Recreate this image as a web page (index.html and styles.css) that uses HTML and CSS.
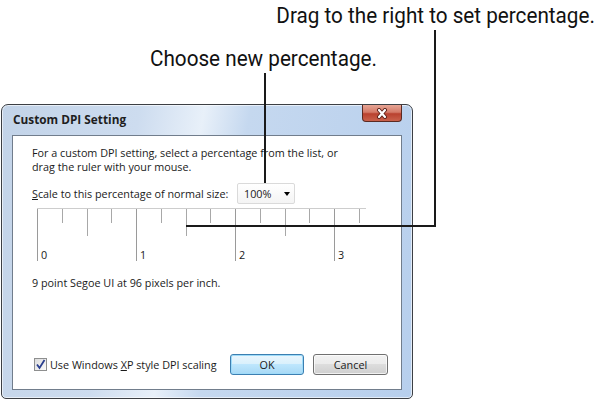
FILE: index.html
```html
<!DOCTYPE html>
<html>
<head>
<meta charset="utf-8">
<link rel="stylesheet" href="styles.css">
</head>
<body>
<div class="page">
  <div class="cap cap-right"><span class="cap-text cap-text-r">Drag to the right to set percentage.</span></div>
  <div class="cap cap-left"><span class="cap-text cap-text-l">Choose new percentage.</span></div>

  <div class="window">
    <div class="titlebar">
      <div class="title">Custom DPI Setting</div>
      <div class="close">
        <svg width="16" height="11" viewBox="0 0 16 11"><path d="M5 2 L11 9 M11 2 L5 9" stroke="#5a1e16" stroke-width="4" stroke-linecap="round"/><path d="M5 2 L11 9 M11 2 L5 9" stroke="#ffffff" stroke-width="2.2" stroke-linecap="round"/></svg>
      </div>
    </div>
    <div class="client">
      <p class="desc">For a custom DPI setting, select a percentage from the list, or<br>drag the ruler with your mouse.</p>
      <div class="scale-row">
        <span class="label"><u>S</u>cale to this percentage of normal size:</span>
        <div class="combo"><span>100%</span><span class="arrow"></span></div>
      </div>
      <div class="ruler">
        <div class="tick major"><span>0</span></div>
        <div class="tick"></div>
        <div class="tick mid"></div>
        <div class="tick"></div>
        <div class="tick major"><span>1</span></div>
        <div class="tick"></div>
        <div class="tick mid"></div>
        <div class="tick"></div>
        <div class="tick major"><span>2</span></div>
        <div class="tick"></div>
        <div class="tick mid"></div>
        <div class="tick"></div>
        <div class="tick major"><span>3</span></div>
        <div class="tick last"></div>
      </div>
      <p class="info">9 point Segoe UI at 96 pixels per inch.</p>
      <div class="bottom">
        <label class="check"><span class="box"><svg width="11" height="11" viewBox="0 0 11 11"><path d="M2 5.5 L4.5 9 L9.5 1" fill="none" stroke="#2a3f8f" stroke-width="1.8"/></svg></span><span>Use Windows <u>X</u>P style DPI scaling</span></label>
        <div class="buttons">
          <div class="btn default">OK</div>
          <div class="btn">Cancel</div>
        </div>
      </div>
    </div>
  </div>

  <div class="leader l1v"></div>
  <div class="leader l1h"></div>
  <div class="leader l2v"></div>
</div>
</body>
</html>
```
FILE: styles.css
```css
html, body {
  margin: 0;
  padding: 0;
  background: #ffffff;
}
.page {
  position: relative;
  width: 596px;
  height: 400px;
  overflow: hidden;
  display: flex;
  flex-direction: column;
}
.cap {
  height: 26px;
  line-height: 26px;
  font-family: Roboto, "Liberation Sans", sans-serif;
  font-size: 22px;
  color: #111;
  white-space: nowrap;
}
.cap-right {
  margin-top: 3px;
  text-align: right;
  padding-right: 1px;
}
.cap-left {
  margin-top: 17px;
  padding-left: 150px;
}
.cap-text {
  display: inline-block;
  transform: scaleX(0.94);
}
.cap-text-r { transform-origin: right center; }
.cap-text-l { transform-origin: left center; }

.window {
  margin-top: 32px;
  margin-left: 1px;
  width: 410px;
  height: 293px;
  border: 1px solid #3c3f44;
  border-radius: 7px 7px 5px 5px;
  background: linear-gradient(100deg, #c2d3e8 0%, #cddcef 30%, #e8f0f9 44%, #c5d8ef 54%, #b7cfed 100%);
  box-shadow: inset 0 0 0 1px rgba(255,255,255,0.6);
  display: flex;
  flex-direction: column;
  font-family: "Open Sans", "Noto Sans", sans-serif;
  color: #1a1a1a;
}
.titlebar {
  height: 30px;
  display: flex;
  justify-content: space-between;
  align-items: flex-start;
  padding-left: 11px;
  padding-right: 10px;
}
.title {
  padding-top: 7px;
  font-weight: bold;
  font-size: 11.8px;
  line-height: 15px;
  color: #1e1e1e;
}
.close {
  width: 38px;
  height: 16px;
  border: 1px solid #5b2a22;
  border-top: none;
  border-radius: 0 0 4px 4px;
  background: linear-gradient(#e6a595 0%, #d47a68 45%, #b9412f 55%, #c9624c 100%);
  display: flex;
  align-items: center;
  justify-content: center;
}
.client {
  flex: 1;
  margin: 0 10px 8px 10px;
  border: 1px solid #717d8c;
  background: #ffffff;
  padding: 10px 13px 14px 19px;
  display: flex;
  flex-direction: column;
  font-size: 10.8px;
  line-height: 14px;
}
.desc, .info {
  margin: 0;
}
.scale-row {
  margin-top: 9px;
  height: 21px;
  display: flex;
  align-items: center;
}
.label {
  width: 205px;
  white-space: nowrap;
}
.combo {
  height: 19px;
  border: 1px solid #dadada;
  border-radius: 2px;
  background: linear-gradient(#ffffff, #f4f4f4);
  display: flex;
  align-items: center;
  justify-content: space-between;
  padding: 0 4px 0 6px;
  box-sizing: content-box;
  width: 46px;
}
.arrow {
  width: 0;
  height: 0;
  border-left: 3.5px solid transparent;
  border-right: 3.5px solid transparent;
  border-top: 4px solid #000;
}
.ruler {
  margin-top: 4px;
  margin-left: 5px;
  width: 329px;
  height: 54px;
  border-top: 1px solid #cdcdcd;
  display: flex;
  align-items: flex-start;
  overflow: hidden;
}
.tick {
  flex: 0 0 24.75px;
  height: 14px;
  border-left: 1px solid #a8a8a8;
  box-sizing: border-box;
}
.tick.mid { height: 27px; }
.tick.major {
  height: 52px;
  border-left-color: #9a9a9a;
  display: flex;
  align-items: flex-end;
  padding-left: 3px;
  line-height: 12px;
}
.tick.last { flex: 0 0 8px; }
.info {
  margin-top: 13px;
}
.bottom {
  margin-top: auto;
  height: 21px;
  display: flex;
  align-items: center;
  justify-content: space-between;
}
.check {
  display: flex;
  align-items: center;
  gap: 3px;
  margin-left: 2px;
  white-space: nowrap;
}
.box {
  width: 11px;
  height: 11px;
  border: 1px solid #8e8f8f;
  background: linear-gradient(135deg, #dcdcdc, #fbfbfb);
  display: flex;
}
.buttons {
  display: flex;
  gap: 9px;
}
.btn {
  width: 73px;
  height: 19px;
  border: 1px solid #707070;
  border-radius: 3px;
  background: linear-gradient(#f2f2f2 0%, #ebebeb 49%, #dddddd 50%, #cfcfcf 100%);
  box-shadow: inset 0 0 0 1px rgba(255,255,255,0.7);
  display: flex;
  align-items: center;
  justify-content: center;
}
.btn.default {
  width: 72px;
  border-color: #3c7fb1;
  background: linear-gradient(#eaf6fd 0%, #d9f0fc 49%, #bee6fd 50%, #a7d9f5 100%);
  box-shadow: inset 0 0 0 1px #9edbf9;
}

.leader {
  position: absolute;
  background: #1a1a1a;
}
.l1v { left: 434px; top: 30px; width: 2px; height: 197px; }
.l1h { left: 186px; top: 225px; width: 250px; height: 2px; }
.l2v { left: 264px; top: 73px; width: 2px; height: 110px; }
```
